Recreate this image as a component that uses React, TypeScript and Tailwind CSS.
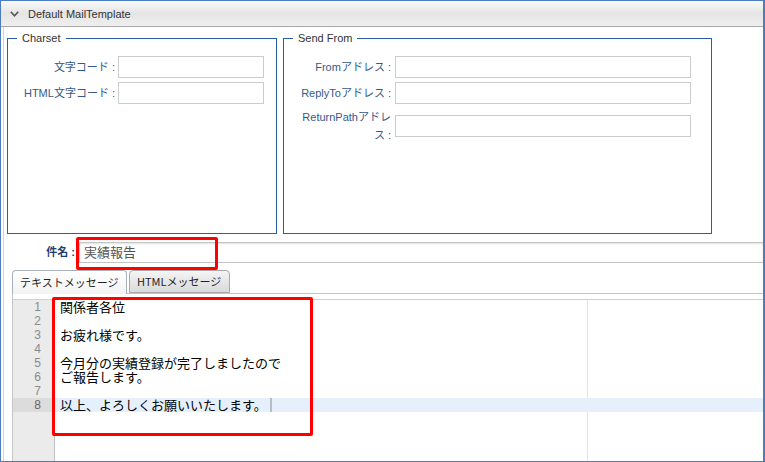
import React from "react";

const lines = [
  "関係者各位",
  "",
  "お疲れ様です。",
  "",
  "今月分の実績登録が完了しましたので",
  "ご報告します。",
  "",
  "以上、よろしくお願いいたします。",
];

function Field({ label, labelW, inputW }: { label: React.ReactNode; labelW: string; inputW: string }) {
  return (
    <div className="flex items-center">
      <div className={`${labelW} text-right text-[11px] leading-[18px] text-[#35598a]`}>{label}</div>
      <div className={`${inputW} h-[22px] border border-[#cccccc] bg-white`} />
    </div>
  );
}

export default function App() {
  return (
    <div className="w-[765px] h-[462px] overflow-hidden bg-white">
      <div className="h-[462px] border border-r-2 border-[#4a7cbf] flex flex-col font-['Liberation_Sans','Noto_Sans_CJK_JP',sans-serif] text-[#333]">
        {/* header */}
        <div className="h-[26px] shrink-0 border-b border-[#a9a9a9] bg-gradient-to-b from-[#f9f9f9] via-[#e5e5e5] to-[#efefef] flex items-center pl-[9px] gap-[9px]">
          <svg width="9" height="6" viewBox="0 0 9 6" className="shrink-0">
            <polyline points="0.8,0.8 4.5,4.8 8.2,0.8" fill="none" stroke="#555" strokeWidth="1.6" />
          </svg>
          <span className="text-[11px] leading-[14px] text-[#333]">Default MailTemplate</span>
        </div>

        {/* body */}
        <div className="flex-1 min-h-0 ml-[2px] border-l border-[#d4d4d4] flex flex-col">
          {/* fieldsets */}
          <div className="mt-[11px] ml-[3px] flex gap-[6px] shrink-0">
            <div className="relative w-[270px] h-[196px] border border-[#2b5f9e]">
              <span className="absolute left-[9px] -top-[8px] bg-white px-[5px] text-[11px] leading-[14px] text-[#333]">Charset</span>
              <div className="pt-[17px] flex flex-col gap-[4px]">
                <Field label="文字コード :" labelW="w-[110px] pr-[3px]" inputW="w-[146px]" />
                <Field label="HTML文字コード :" labelW="w-[110px] pr-[3px]" inputW="w-[146px]" />
              </div>
            </div>
            <div className="relative w-[429px] h-[196px] border border-[#2b5f9e]">
              <span className="absolute left-[9px] -top-[8px] bg-white px-[5px] text-[11px] leading-[14px] text-[#333]">Send From</span>
              <div className="pt-[17px] flex flex-col gap-[4px]">
                <Field label="Fromアドレス :" labelW="w-[111px] pr-[4px]" inputW="w-[296px]" />
                <Field label="ReplyToアドレス :" labelW="w-[111px] pr-[4px]" inputW="w-[296px]" />
                <Field
                  label={
                    <>
                      ReturnPathアドレ
                      <br />ス :
                    </>
                  }
                  labelW="w-[111px] pr-[4px]"
                  inputW="w-[296px]"
                />
              </div>
            </div>
          </div>

          {/* subject */}
          <div className="mt-[8px] flex items-center h-[21px] shrink-0">
            <div className="w-[75px] pr-[4px] text-right text-[11px] font-bold text-[#1f3f6f]">件名 :</div>
            <div className="relative flex-1 h-[21px] border border-r-0 border-[#c4c4c4] shadow-[inset_0_1px_2px_rgba(0,0,0,0.12)] flex items-center pl-[4px] text-[13px] text-[#555]">
              実績報告
              <div className="absolute -left-[4px] -top-[6px] w-[142px] h-[33px] border-[3px] border-[#ff0000] rounded-[2px] pointer-events-none" />
            </div>
          </div>

          {/* tabs */}
          <div className="mt-[7px] ml-[8px] h-[23px] flex items-start gap-[2px] shrink-0">
            <div className="relative z-10 w-[115px] h-[24px] border border-b-0 border-[#a8b2bd] rounded-t-[4px] bg-gradient-to-b from-[#ffffff] to-[#f3f3f3] flex items-center pl-[7px] text-[11px] text-[#222] font-['Noto_Sans_CJK_JP',sans-serif]">
              テキストメッセージ
            </div>
            <div className="w-[101px] h-[23px] border border-[#a9a9a9] rounded-t-[4px] bg-gradient-to-b from-[#f4f4f4] to-[#dadada] flex items-center pl-[7px] text-[11px] text-[#222] font-['Noto_Sans_CJK_JP',sans-serif]">
              HTMLメッセージ
            </div>
          </div>

          {/* panel */}
          <div className="flex-1 min-h-0 ml-[8px] border-t border-l border-[#c5c5c5] pt-[5px] flex flex-col">
            <div className="flex-1 border-t border-[#d0d0d0] flex">
              <div className="w-[42px] bg-[#ebebeb] border-r border-[#c0c0c0] pr-[13px] text-right text-[12px] leading-[14px] text-[#8a8a8a]">
                {lines.map((_, i) => (
                  <div key={i} className={i === 7 ? "h-[14px] bg-[#dcdcdc] -mr-[13px] pr-[13px] text-[#666]" : "h-[14px]"}>
                    {i + 1}
                  </div>
                ))}
              </div>
              <div className="relative flex-1">
                <div className="absolute left-[532px] top-0 bottom-0 w-px bg-[#e6e6e6]" />
                <div className="relative font-['Noto_Sans_CJK_JP',monospace] text-[13px] leading-[14px] text-black">
                  {lines.map((l, i) => (
                    <div key={i} className={i === 7 ? "h-[14px] pl-[5px] bg-[#e6f0fc] flex items-center whitespace-pre" : "h-[14px] pl-[5px] flex items-center whitespace-pre"}>
                      {l}
                      {i === 7 && <span className="ml-[3px] inline-block w-[2px] h-[14px] bg-[#b8bec6]" />}
                    </div>
                  ))}
                </div>
                <div className="absolute -left-[3px] -top-[3px] w-[261px] h-[139px] border-[3px] border-[#ff0000] rounded-[2px] pointer-events-none" />
              </div>
            </div>
          </div>
        </div>
      </div>
    </div>
  );
}
